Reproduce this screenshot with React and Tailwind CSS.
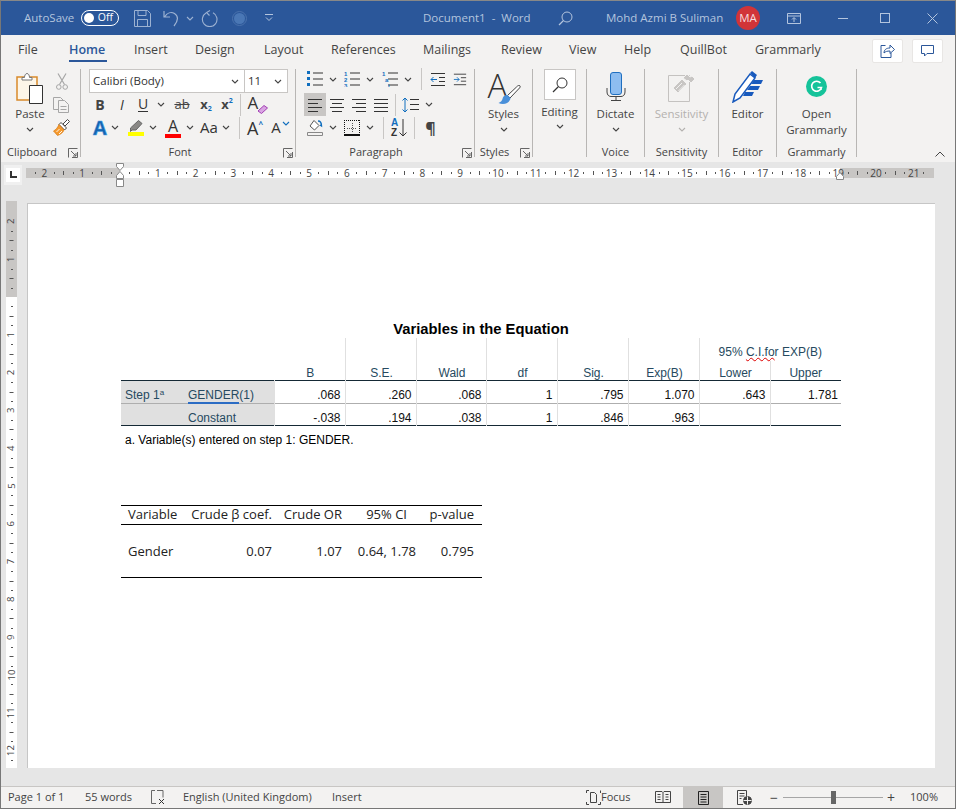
import React from "react";

const ui = "font-['Open_Sans',sans-serif]";

function Chev({ className = "", color = "#444" }) {
  return (
    <svg width="8" height="5" viewBox="0 0 8 5" className={`shrink-0 ${className}`}>
      <path d="M1 1l3 3 3-3" fill="none" stroke={color} strokeWidth="1.1" />
    </svg>
  );
}

function Launcher({ className = "" }) {
  return (
    <svg width="10" height="10" viewBox="0 0 10 10" className={className}>
      <path d="M.5 9.5v-9h9M9.5 4v5.500H4M3 3l5 5M5 8h3V5" fill="none" stroke="#666" strokeWidth="1" />
    </svg>
  );
}

function Cell({ w, children, className = "" }) {
  return <div className={`flex shrink-0 items-center justify-center ${w} ${className}`}>{children}</div>;
}

function Sep({ h = "h-[22px]", className = "" }) {
  return <div className={`w-px shrink-0 bg-[#c8c6c4] ${h} ${className}`} />;
}

function Group({ w, label, launcher, labelClass = "", children }) {
  return (
    <div className={`relative h-[88px] shrink-0 border-r border-[#b8b6b4] ${w}`}>
      <div className="h-[77px]">{children}</div>
      <div className={`flex h-[11px] items-center justify-center text-[11px] leading-none text-[#444] ${labelClass}`}>{label}</div>
      {launcher && <Launcher className="absolute right-[2px] bottom-[-1px]" />}
    </div>
  );
}

function Lines({ rows, color = "#333", w = 16 }) {
  return (
    <svg width={w} height="14" viewBox={`0 0 ${w} 14`}>
      {rows.map((r, i) => (
        <path key={i} d={`M${r[0]} ${r[2]}.5H${r[1]}`} stroke={color} strokeWidth="1" />
      ))}
    </svg>
  );
}

function ListIcon({ kind }) {
  return (
    <svg width="17" height="16" viewBox="0 0 17 16">
      {[1.5, 7.5, 13.5].map((y) => (
        <path key={y} d={`M6 ${y + 0.5}H16`} stroke="#333" strokeWidth="1" />
      ))}
      {kind === "bullet" &&
        [0, 6, 12].map((y) => <rect key={y} x="0" y={y} width="3" height="3" fill="#106ebe" />)}
      {kind === "number" &&
        ["1", "2", "3"].map((t, i) => (
          <text key={t} x="0" y={4.5 + i * 6} fontSize="6" fontWeight="700" fill="#106ebe" fontFamily="Liberation Sans">{t}</text>
        ))}
      {kind === "multi" &&
        ["1", "a", "i"].map((t, i) => (
          <text key={t} x={i * 3} y={4.5 + i * 6} fontSize="6" fontWeight="700" fill="#106ebe" fontFamily="Liberation Sans">{t}</text>
        ))}
    </svg>
  );
}

function IndentIcon({ out }) {
  return (
    <svg width="16" height="14" viewBox="0 0 16 14">
      <path d="M1 1.500H15M9 5.500H15M9 9.500H15M1 13.500H15" stroke="#333" />
      <path d={out ? "M7 7.500H1M3.500 5L1 7.500 3.500 10" : "M1 7.500H7M4.500 5L7 7.500 4.500 10"} stroke="#106ebe" fill="none" />
    </svg>
  );
}

function Title() {
  return (
    <div className={`flex h-[34px] shrink-0 items-center bg-[#2b579a] text-[11.500px] text-[#b4c5de] ${ui}`}>
      <span className="ml-[23px] w-[57px]">AutoSave</span>
      <div className="relative flex h-[16px] w-[38px] shrink-0 items-center justify-end rounded-full border border-white pr-[5px] text-[10.500px] text-white">
        <span className="absolute left-[2px] top-[2px] h-[10px] w-[10px] rounded-full bg-white" />
        Off
      </div>
      <svg width="17" height="17" viewBox="0 0 17 17" className="ml-[15px]">
        <path d="M.5.500h13l3 3v13H.5zM4 .500v5h8v-5M3.500 16.500v-7h10v7" fill="none" stroke="#9db2d2" />
      </svg>
      <svg width="17" height="17" viewBox="0 0 17 17" className="ml-[12px]">
        <path d="M1 1v6h6M1.500 7C4 3 8 1.500 11.500 3.500c4 2.500 4 7-.5 12.500" fill="none" stroke="#9db2d2" strokeWidth="1.200" />
      </svg>
      <Chev className="ml-[6px]" color="#9db2d2" />
      <svg width="17" height="17" viewBox="0 0 17 17" className="ml-[7px]">
        <path d="M9 .500l-3.500 2 3 3M5 3a7.300 7.300 0 1 0 7-.2" fill="none" stroke="#9db2d2" strokeWidth="1.100" />
      </svg>
      <div className="ml-[14px] flex h-[15px] w-[15px] items-center justify-center rounded-full border border-[#4a72ad] bg-[#2b579a]">
        <div className="h-[11px] w-[11px] rounded-full bg-[#4a77b5]" />
      </div>
      <svg width="8" height="8" viewBox="0 0 8 8" className="ml-[18px]">
        <path d="M0 .500h8M1 3.500l3 3 3-3" fill="none" stroke="#b4c5de" />
      </svg>
      <span className="ml-[150px] w-[108px] whitespace-nowrap">Document1&nbsp; -&nbsp; Word</span>
      <svg width="15" height="15" viewBox="0 0 15 15" className="ml-[27px]">
        <circle cx="9" cy="6" r="5" fill="none" stroke="#b4c5de" />
        <path d="M5.500 9.500L1 14" stroke="#b4c5de" strokeWidth="1.200" />
      </svg>
      <span className="ml-[33px] w-[118px] whitespace-nowrap">Mohd Azmi B Suliman</span>
      <div className="ml-[12px] flex h-[24px] w-[24px] items-center justify-center rounded-full bg-[#d13438] text-[11.500px] text-[#f6dcdd]">MA</div>
      <svg width="14" height="11" viewBox="0 0 14 11" className="ml-[27px]">
        <path d="M.5.500h13v10H.5zM.5 3h13M7 9V5M5 6.500l2-2 2 2" fill="none" stroke="#b4c5de" />
      </svg>
      <div className="ml-[37px] h-px w-[10px] bg-[#b4c5de]" />
      <div className="ml-[32px] h-[10px] w-[10px] border border-[#b4c5de]" />
      <svg width="11" height="11" viewBox="0 0 11 11" className="ml-[37px]">
        <path d="M.5.500l10 10M10.500.500l-10 10" stroke="#b4c5de" />
      </svg>
    </div>
  );
}

function Tabs() {
  const tabs = [
    ["File", "w-[51px]"],
    ["Home", "w-[65px]"],
    ["Insert", "w-[61px]"],
    ["Design", "w-[69px]"],
    ["Layout", "w-[67px]"],
    ["References", "w-[92px]"],
    ["Mailings", "w-[78px]"],
    ["Review", "w-[68px]"],
    ["View", "w-[55px]"],
    ["Help", "w-[56px]"],
    ["QuillBot", "w-[75px]"],
    ["Grammarly", "w-[70px]"],
  ];
  return (
    <div className={`flex h-[30px] shrink-0 items-center bg-[#f3f2f1] pl-[17px] pr-[12px] pt-[1px] text-[12.500px] text-[#444] ${ui}`}>
      <div className="flex flex-1">
        {tabs.map(([t, w]) => (
          <div key={t} className={`relative whitespace-nowrap ${w} ${t === "Home" ? "font-semibold text-[#2b579a]" : ""}`}>
            {t}
            {t === "Home" && <div className="absolute left-0 top-[19px] h-[2px] w-[38px] bg-[#2b579a]" />}
          </div>
        ))}
      </div>
      <div className="flex h-[24px] w-[31px] items-center justify-center rounded-[2px] border border-[#e8e6e4] bg-white">
        <svg width="15" height="14" viewBox="0 0 15 14">
          <path d="M5.500 1.500H1v12h10V9M4 9c0-3 2-5 6-5V1l4.500 4.500L10 9.500V7c-3 0-4.500 .5-6 2z" fill="none" stroke="#2b579a" />
        </svg>
      </div>
      <div className="ml-[9px] flex h-[24px] w-[31px] items-center justify-center rounded-[2px] border border-[#e8e6e4] bg-white">
        <svg width="13" height="12" viewBox="0 0 13 12">
          <path d="M.5.500h12v8H6l-2.500 2.500V8.500h-3z" fill="none" stroke="#2b579a" />
        </svg>
      </div>
    </div>
  );
}

function FontA({ children = "A", className = "" }) {
  return <span className={`leading-none ${ui} ${className}`}>{children}</span>;
}

function Ribbon() {
  return (
    <div className={`flex h-[97px] shrink-0 items-start bg-[#f3f2f1] pt-[4px] text-[#444] ${ui}`}>
      <Group w="w-[80px]" label="Clipboard" launcher labelClass="pr-[17px]">
        <div className="flex">
          <div className="ml-[11px] flex w-[36px] flex-col items-center pt-[3px] text-[11.500px]">
            <svg width="28" height="32" viewBox="0 0 28 32">
              <path d="M1 5h20v23H1z" fill="#fdf6e8" stroke="#d98a2b" strokeWidth="1.500" />
              <path d="M6 5.500h2.500c0-2 1-4 2.500-4s2.500 2 2.500 4H16V8H6z" fill="#fff" stroke="#777" />
              <path d="M13.500 13.500h13v18h-13z" fill="#fff" stroke="#333" />
            </svg>
            <span className="mt-[2px] leading-[16px]">Paste</span>
            <Chev className="mt-[5px]" />
          </div>
          <div className="ml-[5px] flex flex-col items-center pt-[4px]">
            <svg width="12" height="17" viewBox="0 0 12 17">
              <path d="M2 .500l6.500 11M10 .500L3.500 11.500" fill="none" stroke="#a6a6a6" strokeWidth="1.200" />
              <circle cx="2.800" cy="14" r="2.300" fill="none" stroke="#a6a6a6" />
              <circle cx="9.200" cy="14" r="2.300" fill="none" stroke="#a6a6a6" />
            </svg>
            <svg width="17" height="16" viewBox="0 0 17 16" className="mt-[7px]">
              <path d="M.5.500h7l3 3v9H.5z" fill="none" stroke="#a6a6a6" />
              <path d="M5.500 3.500h6l4 4v8h-10z" fill="#f3f2f1" stroke="#a6a6a6" />
              <path d="M7.500 9.500h6M7.500 12.500h6" stroke="#a6a6a6" />
            </svg>
            <svg width="17" height="17" viewBox="0 0 17 17" className="mt-[6px]">
              <path d="M10 5l4.500-4.500 2 2L12 7z" fill="#fff" stroke="#444" />
              <path d="M8 3.500l5.500 5.500-2 2L6 5.500z" fill="#fff" stroke="#444" />
              <path d="M6 5.500L11 11c-1 3-4 4.500-6.500 5.500L.5 12c2-1 4-3 5.500-6.500z" fill="#f59a2f" stroke="#d97a10" strokeWidth=".7" />
              <path d="M3.500 13l3-3M6 15l3-3" stroke="#fff" strokeWidth=".9" />
            </svg>
          </div>
        </div>
      </Group>

      <Group w="w-[215px]" label="Font" launcher labelClass="pr-[16px]">
        <div className="ml-[8px] flex h-[24px] text-[11.500px] text-[#333]">
          <div className="flex w-[156px] items-center justify-between border border-[#c8c6c4] bg-white pl-[3px] pr-[5px]">
            <span>Calibri (Body)</span>
            <Chev />
          </div>
          <div className="flex w-[43px] items-center justify-between border border-l-0 border-[#c8c6c4] bg-white pl-[3px] pr-[5px]">
            <span>11</span>
            <Chev />
          </div>
        </div>
        <div className="ml-[8px] flex h-[23px] items-center text-[14px]">
          <Cell w="w-[22px]"><FontA className="font-bold text-[#444]">B</FontA></Cell>
          <Cell w="w-[22px]"><FontA className="italic text-[#333]">I</FontA></Cell>
          <Cell w="w-[20px]"><FontA className="border-b border-[#333] text-[#333]">U</FontA></Cell>
          <Cell w="w-[16px]"><Chev /></Cell>
          <Cell w="w-[26px]"><FontA className="text-[13px] text-[#444] line-through">ab</FontA></Cell>
          <Cell w="w-[22px]">
            <FontA className="text-[13px] font-bold text-[#444]">x</FontA>
            <FontA className="mt-[8px] text-[7px] font-bold text-[#106ebe]">2</FontA>
          </Cell>
          <Cell w="w-[20px]">
            <FontA className="text-[13px] font-bold text-[#444]">x</FontA>
            <FontA className="mb-[8px] text-[7px] font-bold text-[#106ebe]">2</FontA>
          </Cell>
          <Sep className="ml-[3px]" />
          <Cell w="w-[31px]">
            <div className="relative h-[18px] w-[18px]">
              <FontA className="absolute left-0 top-[-2px] text-[17px] text-[#333]">A</FontA>
              <svg width="11" height="9" viewBox="0 0 11 9" className="absolute bottom-0 right-[-2px]">
                <path d="M7 .500L10.500 3 4.500 8.500 1 6z" fill="#d9a5e3" stroke="#a23fb3" />
              </svg>
            </div>
          </Cell>
        </div>
        <div className="ml-[8px] flex h-[23px] items-center">
          <Cell w="w-[22px]"><FontA className="text-[20px] font-bold text-[#1565b0] [-webkit-text-stroke:0.5px_#4aa3e8]">A</FontA></Cell>
          <Cell w="w-[8px]"><Chev /></Cell>
          <Cell w="w-[26px]" className="ml-[4px]">
            <div className="flex flex-col items-center">
              <svg width="14" height="12" viewBox="0 0 14 12">
                <path d="M9.500 .500l3.500 3-6 6.500H3l-1.500 1.500V8z" fill="#8a8886" stroke="#666" />
              </svg>
              <div className="h-[4px] w-[16px] bg-[#ffff00]" />
            </div>
          </Cell>
          <Cell w="w-[8px]"><Chev /></Cell>
          <Cell w="w-[26px]" className="ml-[3px]">
            <div className="flex flex-col items-center">
              <FontA className="text-[16px] text-[#333]">A</FontA>
              <div className="h-[4px] w-[16px] bg-[#ff0000]" />
            </div>
          </Cell>
          <Cell w="w-[8px]"><Chev /></Cell>
          <Cell w="w-[26px]" className="ml-[2px] text-[15px]"><FontA className="text-[#333]">Aa</FontA></Cell>
          <Cell w="w-[8px]"><Chev /></Cell>
          <Sep className="ml-[9px]" />
          <Cell w="w-[30px]"><FontA className="text-[18px] text-[#333]">A</FontA><FontA className="mb-[8px] text-[8px] font-bold text-[#106ebe]">^</FontA></Cell>
          <Cell w="w-[12px]"><FontA className="text-[15px] text-[#333]">A</FontA></Cell>
          <Chev color="#106ebe" className="mb-[8px]" />
        </div>
      </Group>

      <Group w="w-[179px]" label="Paragraph" launcher labelClass="pr-[18px]">
        <div className="ml-[10px] flex h-[24px] items-center pb-[4px]">
          <Cell w="w-[18px]"><ListIcon kind="bullet" /></Cell>
          <Cell w="w-[18px]"><Chev /></Cell>
          <Cell w="w-[20px]"><ListIcon kind="number" /></Cell>
          <Cell w="w-[16px]"><Chev /></Cell>
          <Cell w="w-[24px]"><ListIcon kind="multi" /></Cell>
          <Cell w="w-[12px]"><Chev /></Cell>
          <Sep className="ml-[7px]" />
          <Cell w="w-[31px]"><IndentIcon out /></Cell>
          <Cell w="w-[14px]"><IndentIcon /></Cell>
        </div>
        <div className="ml-[8px] flex h-[23px] items-center">
          <Cell w="w-[22px]" className="h-[23px] bg-[#c8c6c4]"><Lines rows={[[1, 15, 1], [1, 11, 5], [1, 15, 9], [1, 11, 13]]} /></Cell>
          <Cell w="w-[22px]"><Lines rows={[[1, 15, 1], [3, 13, 5], [1, 15, 9], [3, 13, 13]]} /></Cell>
          <Cell w="w-[22px]"><Lines rows={[[1, 15, 1], [5, 15, 5], [1, 15, 9], [5, 15, 13]]} /></Cell>
          <Cell w="w-[22px]"><Lines rows={[[1, 15, 1], [1, 15, 5], [1, 15, 9], [1, 15, 13]]} /></Cell>
          <Sep className="ml-[3px]" />
          <Cell w="w-[29px]">
            <svg width="17" height="16" viewBox="0 0 17 16">
              <path d="M3 1v14M.5 3.500L3 1l2.500 2.500M.5 12.500L3 15l2.500-2.500" fill="none" stroke="#106ebe" />
              <path d="M8 2.500h9M8 7.500h9M8 12.500h9" stroke="#333" />
            </svg>
          </Cell>
          <Cell w="w-[8px]"><Chev /></Cell>
        </div>
        <div className="ml-[10px] flex h-[23px] items-center">
          <Cell w="w-[18px]">
            <svg width="17" height="17" viewBox="0 0 17 17">
              <path d="M3 7l4-5.500 5 5-4.500 4.500z" fill="#fff" stroke="#555" />
              <path d="M11 2c2 0 3.500 2 3.500 5l-1.500-1" fill="none" stroke="#106ebe" strokeWidth="1.400" />
              <path d="M.5 13.500h15v3H.5z" fill="#f3f2f1" stroke="#888" />
            </svg>
          </Cell>
          <Cell w="w-[18px]"><Chev /></Cell>
          <Cell w="w-[20px]">
            <svg width="16" height="16" viewBox="0 0 16 16" shapeRendering="crispEdges">
              <path d="M0 .500h16M.5 0v14M15.500 0v14" fill="none" stroke="#111" strokeDasharray="1 1" />
              <path d="M8 3v10M3 8h10" fill="none" stroke="#555" strokeDasharray="1 1" />
              <path d="M0 15h16" stroke="#111" strokeWidth="2" />
            </svg>
          </Cell>
          <Cell w="w-[16px]"><Chev /></Cell>
          <Sep className="ml-[5px]" />
          <Cell w="w-[30px]">
            <div className="flex items-center">
              <div className="flex flex-col font-['Liberation_Sans',sans-serif] text-[10px] font-bold leading-[10px]">
                <span className="text-[#106ebe]">A</span>
                <span className="text-[#333]">Z</span>
              </div>
              <svg width="8" height="18" viewBox="0 0 8 18" className="ml-[1px]">
                <path d="M4 0v17M.5 13.500L4 17l3.500-3.500" fill="none" stroke="#333" />
              </svg>
            </div>
          </Cell>
          <Sep />
          <Cell w="w-[31px]"><FontA className="font-['Liberation_Sans',sans-serif] text-[16px] font-bold text-[#444]">¶</FontA></Cell>
        </div>
      </Group>

      <Group w="w-[58px]" label="Styles" launcher labelClass="pr-[18px]">
        <div className="flex flex-col items-center pt-[3px] text-[11.500px]">
          <div className="relative h-[33px] w-[32px]">
            <FontA className="absolute left-0 top-[-3px] text-[33px] font-light text-[#333]">A</FontA>
            <svg width="24" height="20" viewBox="0 0 24 20" className="absolute bottom-0 right-[-1px]">
              <path d="M22 .500c1.500 0 1.500 1.500 .5 2.500L13 13l-2.500-2.500 9-8.500c1-1 1.500-1.500 2.500-1.500z" fill="#fff" stroke="#444" />
              <path d="M10.500 10C7 10 6 12 5.500 14c-.5 2-2 3-4 4 4.500 2 11 1 12-5z" fill="#4a90d9" />
            </svg>
          </div>
          <span className="mt-[1px] leading-[16px]">Styles</span>
          <Chev className="mt-[5px]" />
        </div>
      </Group>

      <Group w="w-[54px]" label="">
        <div className="flex flex-col items-center text-[11.500px]">
          <div className="flex h-[31px] w-[32px] items-center justify-center border border-[#c8c6c4] bg-white">
            <svg width="16" height="16" viewBox="0 0 16 16">
              <circle cx="10" cy="6" r="5" fill="none" stroke="#333" />
              <path d="M6.500 9.500L1 15" stroke="#333" strokeWidth="1.200" />
            </svg>
          </div>
          <span className="mt-[4px] leading-[16px]">Editing</span>
          <Chev className="mt-[4px]" />
        </div>
      </Group>

      <Group w="w-[58px]" label="Voice">
        <div className="flex flex-col items-center pt-[3px] text-[11.500px]">
          <svg width="20" height="30" viewBox="0 0 20 30" className="mb-[3px]">
            <rect x="4.500" y=".500" width="11" height="22" rx="2.500" fill="#8dbdf0" stroke="#1f6fc0" />
            <path d="M1 16v4c0 3 2 4.500 4 4.500h10c2 0 4-1.500 4-4.500v-4M10 25v3M5 28.500h10" fill="none" stroke="#444" />
          </svg>
          <span className="mt-[1px] leading-[16px]">Dictate</span>
          <Chev className="mt-[5px]" />
        </div>
      </Group>

      <Group w="w-[74px]" label="Sensitivity">
        <div className="flex flex-col items-center pt-[3px] text-[11.500px] text-[#b3b1af]">
          <svg width="28" height="30" viewBox="0 0 28 30" className="mb-[3px]">
            <path d="M.5 3.500h21v26H.5z" fill="#f3f2f1" stroke="#c4c2c0" />
            <path d="M5 16L14 7l5 5-9 9z" fill="#c8c6c4" stroke="#f3f2f1" />
            <path d="M8 17l6-6M10.500 19l6-6" stroke="#f3f2f1" />
            <path d="M15 6l4-4 3 3 2-1 3 3-2 2-2 2-3-3-1 1z" fill="#c8c6c4" stroke="#f3f2f1" />
          </svg>
          <span className="mt-[1px] whitespace-nowrap leading-[16px]">Sensitivity</span>
          <Chev className="mt-[5px]" color="#b3b1af" />
        </div>
      </Group>

      <Group w="w-[58px]" label="Editor">
        <div className="flex flex-col items-center pt-[2px] text-[11.500px]">
          <svg width="32" height="32" viewBox="0 0 32 32" className="mb-[3px]">
            <path d="M1 31l2-8L18 3l5 4-15 20z" fill="#fff" stroke="#185abd" strokeWidth="1.500" />
            <path d="M18 2l2-2 5 4-2 3z" fill="#185abd" />
            <path d="M22 9h9l-2 4H19zM18 15h10l-2 4H15zM13 21h9l-2 4h-9z" fill="#185abd" />
          </svg>
          <span className="leading-[16px]">Editor</span>
        </div>
      </Group>

      <Group w="w-[80px]" label="Grammarly">
        <div className="flex flex-col items-center pt-[7px] text-[11.500px]">
          <svg width="21" height="21" viewBox="0 0 21 21" className="mb-[6px]">
            <circle cx="10.500" cy="10.500" r="10.500" fill="#15c39a" />
            <path d="M14.500 7a5 5 0 1 0 1 4.500H11.500M15 14v-3" fill="none" stroke="#fff" strokeWidth="1.600" />
          </svg>
          <span className="mt-[3px] leading-[16px]">Open</span>
          <span className="whitespace-nowrap leading-[16px]">Grammarly</span>
        </div>
      </Group>

      <div className="flex h-[88px] flex-1 items-end justify-end pr-[10px]">
        <svg width="10" height="6" viewBox="0 0 10 6">
          <path d="M.5 5.500L5 1l4.500 4.500" fill="none" stroke="#444" />
        </svg>
      </div>
    </div>
  );
}

const CM = 37.8;

function HRuler() {
  const marks = [];
  for (let i = -2; i <= 21; i++) {
    const x = 120 + i * CM;
    if (i !== 0) marks.push({ x, label: String(Math.abs(i)) });
  }
  const ticks = [];
  for (let i = -10; i <= 85; i++) {
    if (i % 4 === 0) continue;
    const x = 120 + (i * CM) / 4;
    if (x < 28 || x > 932) continue;
    ticks.push({ x, long: i % 2 === 0 });
  }
  return (
    <svg width="910" height="25" viewBox="26 0 910 25">
      <rect x="26" y="6" width="94" height="10" fill="#c8c6c4" />
      <rect x="120" y="6" width="720" height="10" fill="#fff" />
      <rect x="840" y="6" width="94" height="10" fill="#c8c6c4" />
      {ticks.map((t) => (
        <rect key={t.x} x={Math.round(t.x)} y={t.long ? 9 : 10} width="1" height={t.long ? 4 : 2} fill="#555" />
      ))}
      {marks.map((m) => (
        <text key={m.x} x={m.x} y="14.500" fontSize="10" textAnchor="middle" fill="#444" fontFamily="Open Sans">{m.label}</text>
      ))}
      <path d="M116.500 1.500h7v3l-3.500 4-3.500-4zM116.500 16.500v-3l3.500-4 3.500 4v3zM116.500 17.500h7v7h-7z" fill="#fff" stroke="#888" />
      <path d="M836.500 17.500v-3l3.500-4 3.500 4v3z" fill="#fff" stroke="#888" />
    </svg>
  );
}

function VRuler() {
  const labels = [];
  for (let i = -2; i <= 12; i++) if (i !== 0) labels.push({ y: 298 + i * CM, t: String(Math.abs(i)) });
  const ticks = [];
  for (let i = -8; i <= 49; i++) {
    if (i % 4 === 0) continue;
    ticks.push({ y: 298 + (i * CM) / 4, long: i % 2 === 0 });
  }
  return (
    <svg width="11" height="567" viewBox="0 202 11 567" className="shrink-0 overflow-visible">
      <rect x="0" y="202" width="11" height="96" fill="#c8c6c4" />
      <rect x="0" y="298" width="11" height="471" fill="#fff" />
      {ticks.map((t) => (
        <rect key={t.y} x={t.long ? 3.500 : 5} y={Math.round(t.y)} width={t.long ? 4 : 2} height="1" fill="#555" />
      ))}
      {labels.map((l) => (
        <text key={l.y} x="5.500" y={l.y + 3} fontSize="9.500" textAnchor="middle" fill="#444" fontFamily="Open Sans" transform={`rotate(-90 5.500 ${l.y})`}>{l.t}</text>
      ))}
    </svg>
  );
}

function SpssTable() {
  const head = "align-bottom pl-[2px] text-center font-normal text-[#264a60] border-r border-[#e0e0e0]";
  const num = "pr-[4px] text-right border-r border-[#e0e0e0] text-[#111]";
  const rows = [
    { a: ".068", b: ".260", c: ".068", d: "1", e: ".795", f: "1.070", g: ".643", h: "1.781" },
    { a: "-.038", b: ".194", c: ".038", d: "1", e: ".846", f: ".963", g: "", h: "" },
  ];
  return (
    <div className="ml-[93px] w-[720px] font-['Liberation_Sans',sans-serif]">
      <div className="h-[17px] text-center text-[14.750px] font-bold leading-[16px] text-black">Variables in the Equation</div>
      <table className="w-[719px] table-fixed border-collapse text-[12px] leading-[14px]">
        <colgroup>
          <col className="w-[63px]" />
          <col className="w-[90px]" />
          <col className="w-[71px]" />
          <col className="w-[71px]" />
          <col className="w-[70px]" />
          <col className="w-[71px]" />
          <col className="w-[71px]" />
          <col className="w-[71px]" />
          <col className="w-[71px]" />
          <col className="w-[71px]" />
        </colgroup>
        <tbody>
          <tr className="h-[23px]">
            <td colSpan={2} />
            <td className="border-r border-[#e0e0e0]" />
            <td className="border-r border-[#e0e0e0]" />
            <td className="border-r border-[#e0e0e0]" />
            <td className="border-r border-[#e0e0e0]" />
            <td className="border-r border-[#e0e0e0]" />
            <td className="border-r border-[#e0e0e0]" />
            <td colSpan={2} className="whitespace-nowrap pt-[5px] text-center text-[#264a60]">
              95% <span className="underline decoration-wavy decoration-[#d00] decoration-1">C.I.fo</span>r EXP(B)
            </td>
          </tr>
          <tr className="h-[19px] border-b border-[#152935]">
            <td colSpan={2} />
            {["B", "S.E.", "Wald", "df", "Sig.", "Exp(B)", "Lower"].map((h) => (
              <td key={h} className={head}>{h}</td>
            ))}
            <td className="text-center align-bottom text-[#264a60]">Upper</td>
          </tr>
          {rows.map((r, i) => (
            <tr key={i} className={i === 0 ? "h-[23px] border-b border-[#aeaeae] align-bottom [&>td]:pb-[1px]" : "h-[22px] border-b border-[#152935] align-bottom"}>
              <td className="bg-[#e0e0e0] pl-[4px] text-[#264a60]">
                {i === 0 && (
                  <span>Step 1<sup className="text-[8px]">a</sup></span>
                )}
              </td>
              <td className="border-r border-[#e0e0e0] bg-[#e0e0e0] pl-[4px] text-[#264a60]">
                {i === 0 ? <span className="border-b-2 border-double border-[#2b6cc4] leading-[13px]">GENDER</span> : "Constant"}
                {i === 0 && "(1)"}
              </td>
              <td className={num}>{r.a}</td>
              <td className={num}>{r.b}</td>
              <td className={num}>{r.c}</td>
              <td className={num}>{r.d}</td>
              <td className={num}>{r.e}</td>
              <td className={num}>{r.f}</td>
              <td className={num}>{r.g}</td>
              <td className="pr-[3px] text-right text-[#111]">{r.h}</td>
            </tr>
          ))}
        </tbody>
      </table>
      <div className="mt-[7px] pl-[4px] text-[12px] leading-[14px] text-black">a. Variable(s) entered on step 1: GENDER.</div>
    </div>
  );
}

function CrudeTable() {
  const row = ["Gender", "0.07", "1.07", "0.64, 1.78", "0.795"];
  const hdr = ["Variable", "Crude β coef.", "Crude OR", "95% CI", "p-value"];
  const cols = ["w-[60px] text-left", "w-[84px] text-right", "w-[70px] text-right", "w-[74px] text-right", "w-[58px] text-right"];
  return (
    <div className={`ml-[93px] mt-[58px] w-[361px] border-y border-black px-[7px] text-[13px] text-[#222] ${ui}`}>
      <div className="-mx-[7px] flex h-[19px] items-center border-b border-black px-[7px] pt-[1px]">
        {hdr.map((h, i) => (
          <div key={h} className={`${cols[i]} whitespace-nowrap ${i === 3 ? "pr-[9px]" : ""}`}>{h}</div>
        ))}
      </div>
      <div className="flex h-[52px] items-center pt-[2px]">
        {row.map((c, i) => (
          <div key={c} className={`${cols[i]} whitespace-nowrap`}>{c}</div>
        ))}
      </div>
    </div>
  );
}

function StatusBar() {
  return (
    <div className={`flex h-[22px] shrink-0 items-center border-t border-[#c8c6c4] bg-[#f3f2f1] text-[11px] text-[#444] ${ui}`}>
      <span className="ml-[7px] w-[77px]">Page 1 of 1</span>
      <span className="w-[66px]">55 words</span>
      <svg width="15" height="15" viewBox="0 0 15 15">
        <path d="M4 .500h-3.500v13H5M6 .500h6v7" fill="none" stroke="#666" />
        <path d="M8 9l5 5M13 9l-5 5" stroke="#333" />
      </svg>
      <span className="ml-[17px] w-[149px] whitespace-nowrap">English (United Kingdom)</span>
      <span className="w-[254px]">Insert</span>
      <svg width="15" height="15" viewBox="0 0 15 15">
        <path d="M.5 3V.5H3M.5 12v2.500H3M14.500 3V.5M14.500 12v2.500H12" fill="none" stroke="#444" />
        <path d="M4.500 2.500h4l2 2v8h-6z" fill="none" stroke="#444" />
      </svg>
      <span className="w-[42px]">Focus</span>
      <svg width="16" height="13" viewBox="0 0 16 13" className="ml-[12px]">
        <path d="M.5.500h6.500l1 1 1-1h6.500v11H.5zM8 1.500v10M2.500 3.500h3M2.500 6h3M2.500 8.500h3M10.500 3.500h3M10.500 6h3M10.500 8.500h3" fill="none" stroke="#444" />
      </svg>
      <div className="ml-[12px] flex h-[21px] w-[40px] items-center justify-center bg-[#c8c6c4]">
        <svg width="11" height="14" viewBox="0 0 11 14">
          <path d="M.5.500h10v13H.5zM2.500 3.500h6M2.500 6h6M2.500 8.500h6M2.500 11h6" fill="none" stroke="#222" />
        </svg>
      </div>
      <svg width="15" height="15" viewBox="0 0 15 15" className="ml-[14px]">
        <path d="M6 14.500H.5V.5h9v6M2.500 3.500h5M2.500 6h5M2.500 8.500h2" fill="none" stroke="#444" />
        <circle cx="10.500" cy="10.500" r="4" fill="#444" stroke="#444" />
        <path d="M6.500 10.500h8M10.500 6.500v8" stroke="#f3f2f1" />
      </svg>
      <div className="ml-[18px] text-[14px] leading-none">−</div>
      <div className="relative ml-[5px] h-px w-[100px] bg-[#a6a6a6]">
        <div className="absolute left-[48px] top-[-6px] h-[13px] w-[5px] bg-[#666]" />
      </div>
      <div className="ml-[4px] text-[14px] leading-none">+</div>
      <span className="ml-[15px]">100%</span>
    </div>
  );
}

export default function App() {
  return (
    <div className="flex h-[809px] w-[956px] flex-col overflow-hidden border-x border-b border-t border-x-[#777] border-b-[#777] border-t-[#888] bg-[#e6e6e6]">
      <Title />
      <Tabs />
      <Ribbon />
      <div className="flex h-[25px] shrink-0 bg-[#e6e6e6]">
        <div className="ml-[3px] flex h-[20px] w-[18px] shrink-0 items-center justify-center self-center bg-[#f0f0f0]">
          <div className="flex h-[14px] w-[14px] items-center justify-center bg-white">
            <svg width="7" height="7" viewBox="0 0 7 7"><path d="M1 0v6h6" fill="none" stroke="#333" strokeWidth="2" /></svg>
          </div>
        </div>
        <div className="ml-[4px]"><HRuler /></div>
      </div>
      <div className="flex flex-1 overflow-hidden">
        <div className="ml-[5px] pt-[14px]"><VRuler /></div>
        <div className="ml-[10px] mt-[16px] h-[565px] w-[908px] shrink-0 border-l border-t border-[#c6c6c6] bg-white pt-[117px]">
          <SpssTable />
          <CrudeTable />
        </div>
      </div>
      <StatusBar />
    </div>
  );
}
